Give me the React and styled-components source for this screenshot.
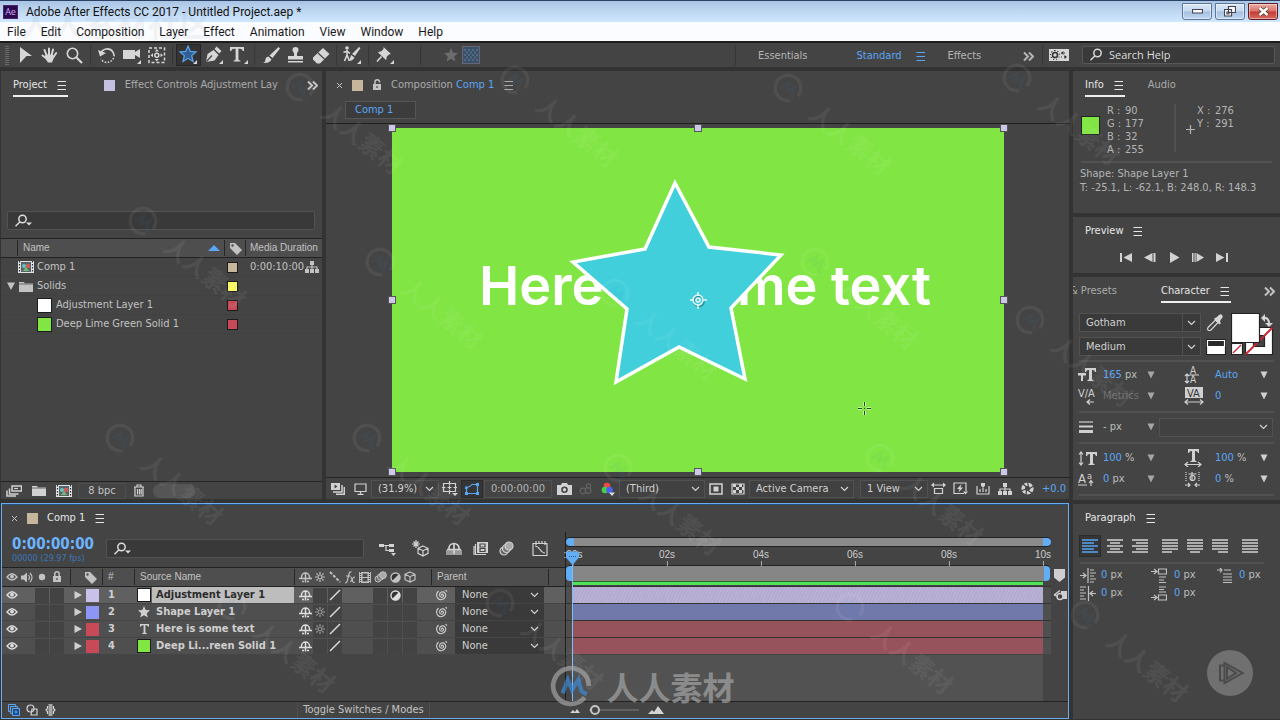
import React from 'react';
import styled, { createGlobalStyle, css } from 'styled-components';

const Global = createGlobalStyle`
  * { box-sizing: border-box; }
  body { margin: 0; background: #333; color: #c2c2c2;
    font: 11px/14px "DejaVu Sans Condensed", "DejaVu Sans", sans-serif; }
  button, input, select { font: inherit; color: inherit; margin: 0; padding: 0; border: 0;
    background: none; border-radius: 0; outline: 0; }
  input::placeholder { color: inherit; opacity: 1; }
  a { color: inherit; text-decoration: none; }
`;

/* ---------- page frame ---------- */
const Page = styled.div`
  position: relative; min-height: 100vh; display: flex; flex-direction: column; overflow: hidden;
`;
const TitleBar = styled.header`
  height: 22px; display: flex; align-items: center; padding: 0 2px; gap: 8px;
  border-top: 1px solid #2a4266; color: #111;
  background: linear-gradient(#a9c4e4, #bdd6f0 45%, #cfe7ff);
  font: 12px/16px Roboto, "Open Sans", sans-serif;
`;
const AppBadge = styled.span`
  width: 15px; height: 14px; background: #2b0a4c; border: 1px solid #4b2372; color: #d6a8ff;
  font: 9px/11px "Open Sans", sans-serif; text-align: center; margin-left: 1px;
`;
const Title = styled.span`flex: 1; white-space: nowrap;`;
const WinButtons = styled.div`display: flex; gap: 3px;`;
const WinButton = styled.button`
  width: 30px; height: 17px; border: 1px solid ${p => (p.$close ? '#5a1c20' : '#5d7596')};
  border-radius: 0 0 3px 3px; display: grid; place-items: center;
  background: ${p => (p.$close
    ? 'linear-gradient(#eaa9a4, #d9756d 48%, #c23b34 52%, #d8685c)'
    : 'linear-gradient(#dbe8f7, #c4d8ee 48%, #a4bfdf 52%, #c0d8f2)')};
  box-shadow: inset 0 0 0 1px rgba(255,255,255,.45);
`;
const MenuBar = styled.nav`
  height: 21px; display: flex; align-items: center; gap: 15px; padding: 0 7px 0;
  background: #fbfcff; color: #1a1a1a; border-bottom: 2px solid #1d1d1d;
  font: 12px/16px Roboto, "Open Sans", sans-serif;
`;
const Toolbar = styled.div`
  height: 24px; background: #444; display: flex; align-items: center; padding-left: 5px;
`;
const Grip = styled.span`
  width: 4px; height: 19px; margin-right: 3px;
  background: repeating-linear-gradient(#6a6a6a 0 1px, #444 1px 2px);
`;
const Tool = styled.button`
  width: 25px; height: 22px; display: grid; place-items: center; color: #d6d6d6;
  ${p => p.$active && css`background: #333; box-shadow: inset 0 0 0 1px #262626;`}
`;
const Rule = styled.span`width: 1px; height: 20px; background: #363636; margin: 0 3px; flex: none;`;
const ShapeOptions = styled.div`display: flex; align-items: center; gap: 4px; margin-left: 20px; flex: 1;`;
const Workspaces = styled.nav`
  display: flex; align-items: center; padding: 2px 5px 0 19px; width: 300px; color: #b5b5b5; gap: 14px;
`;
const Workspace = styled.a`
  color: ${p => (p.$active ? '#5aa5f5' : 'inherit')}; margin: 0 ${p => (p.$wide ? 35 : 0)}px 0 ${p => p.$ml || 0}px;
`;
const SearchHelp = styled.label`
  width: 193px; height: 18px; margin: 0 5px 0 11px; padding: 0 6px; gap: 2px;
  display: flex; align-items: center;
  background: #393939; border: 1px solid #575757; color: #d6d6d6; border-radius: 2px;
  input { width: 100%; font: 11px/16px "Open Sans", sans-serif; color: #ddd; }
`;

const Workbench = styled.main`
  flex: 1; display: flex; gap: 4px; padding: 4px 0 1px 1px;
`;
const MainColumn = styled.div`flex: 1; min-width: 0; display: flex; flex-direction: column; gap: 4px;`;
const SideColumn = styled.aside`width: 207px; flex: none; display: flex; flex-direction: column; gap: 4px;`;
const UpperRow = styled.div`display: flex; gap: 4px;`;
const Panel = styled.section`
  background: #444; display: flex; flex-direction: column; min-width: 0;
  flex: ${p => (p.$grow ? 1 : 'none')}; width: ${p => (p.$w ? p.$w + 'px' : 'auto')};
  height: ${p => (p.$h ? p.$h + 'px' : 'auto')};
`;
const Tabs = styled.div`
  height: 28px; flex: none; display: flex; align-items: center; white-space: nowrap; overflow: hidden;
  padding-left: ${p => p.$pad || 12}px; gap: ${p => p.$gap || 0}px;
`;
const Tab = styled.button`
  height: 22px; margin-top: 2px; display: flex; align-items: center; gap: 10px; flex: none;
  padding: 0 1px 0 0; color: ${p => (p.$active ? '#e6e6e6' : '#aaa')};
  border-bottom: 2px solid ${p => (p.$line ? '#eee' : 'transparent')};
`;
const ClipTab = styled(Tab)`flex: 0 1 auto; min-width: 0; overflow: hidden; margin-left: 36px; margin-right: 28px;`;
const Chip = styled.span`
  width: ${p => p.$s || 11}px; height: ${p => p.$s || 11}px; flex: none; display: block; background: ${p => p.$c};
  border: ${p => (p.$b ? '1px solid #1c1c1c' : '0')};
`;
const Push = styled.span`flex: 1;`;
const Blue = styled.span`color: #5aa5f5;`;
const Glyph = styled.svg`display: block; flex: none;`;

/* ---------- icons ---------- */
const G = ({ w = 16, h = 16, children, ...r }) => (
  <Glyph width={w} height={h} viewBox={`0 0 ${w} ${h}`} fill="none" stroke="currentColor" strokeWidth="1.200" aria-hidden="true" {...r}>{children}</Glyph>
);
const f = { fill: 'currentColor', stroke: 'none' };
const corner = <path {...f} d="M19 15v4h-4z" />;
const MenuIcon = () => <G w={10} h={10} strokeWidth="1"><path d="M0.500 1.500h8.500M0.500 5.500h8.500M0.500 9.500h8.500" /></G>;
const More = () => <G w={11} h={11} strokeWidth="2"><path d="M1 1.500l4 4-4 4M6 1.500l4 4-4 4" /></G>;
const Close = () => <G w={7} h={7} strokeWidth="1"><path d="M1 1l5 5M6 1L1 6" /></G>;
const Chevron = () => <G w={9} h={6}><path d="M1 1l3.500 3.500L8 1" /></G>;
const Down = () => <G w={8} h={8}><path {...f} d="M0.500 0.500h7L4 7.500z" /></G>;
const Search = ({ drop }) => (
  <G w={18} h={14} strokeWidth="1.500"><circle cx="8.500" cy="5" r="3.700" /><path d="M6 7.800L1.500 12.300" />
    {drop && <path {...f} d="M12 8.500h6l-3 3z" />}</G>
);
const Tag = () => <G w={13} h={13}><path fill="currentColor" fillRule="evenodd" stroke="none" d="M1 1h5l7 7-5 5-7-7zM3.500 2.300a1.200 1.200 0 100 2.400 1.200 1.200 0 000-2.400z" /></G>;
const Flow = () => <G w={14} h={12}><path {...f} d="M5 0h4v4H5zM0 8h4v4H0zM5 8h4v4H5zM10 8h4v4h-4z" /><path d="M7 4v4M2 8V6h10v2" /></G>;
const Folder = () => <G w={14} h={11}><path {...f} d="M0 1h5l1 1.500h8V11H0z" /><path stroke="#777" d="M0 3h14" /></G>;
const CompIcon = () => (
  <G w={16} h={12}><path fill="#e2e2e2" stroke="none" d="M0 0h16v12H0z" /><path stroke="#333" strokeDasharray="1.500 1.500" d="M1.500 0v12M14.500 0v12" />
    <path fill="#58646c" stroke="none" d="M3 1h10v10H3z" /><circle cx="6" cy="5" r="2" fill="#65c7c0" stroke="none" />
    <path fill="#c75d5d" stroke="none" d="M8 3h4v4H8z" /><path fill="#7bbb70" stroke="none" d="M5 10l3-4 3 4z" /></G>
);
const starPath = 'M7 0l2 4.700 5 .400-3.800 3.300 1.200 5L7 10.700l-4.400 2.700 1.200-5L0 5.100l5-.400z';
const Star = ({ c, s, size = 14 }) => <G w={size} h={size} viewBox="0 0 14 14"><path d={starPath} fill={c || 'currentColor'} stroke={s || 'none'} /></G>;
const Eye = () => <G w={12} h={10}><path d="M1 5q5-6.500 10 0Q6 11 1 5z" strokeWidth="1.400" /><circle cx="6" cy="4.700" r="1.900" {...f} /></G>;
const Speaker = () => <G w={12} h={11}><path {...f} d="M0 3.500h2.500L6 0.500v10L2.500 7.500H0z" /><path d="M7.500 3q2 2.500 0 5M9 1q4 4.500 0 9" /></G>;
const Dot = () => <G w={8} h={8}><circle cx="4" cy="4" r="3.200" {...f} /></G>;
const Lock = ({ open }) => <G w={10} h={12}><path {...f} d="M1 5h8v6H1z" /><path d={open ? 'M3 5V3a2.200 2.200 0 014.500 0v.500' : 'M2.800 5V3a2.200 2.200 0 014.400 0v2'} strokeWidth="1.500" /><path stroke="#444" d="M5 7v2" /></G>;
const Shy = () => <G w={13} h={11}><path d="M2.500 6.500V5a4 4 0 018 0v1.500M0 6.500h13M6.500 1v9.500M3 9.500h2M8 9.500h2" strokeWidth="1.500" /></G>;
const Sun = ({ dim }) => <G w={10} h={10} stroke={dim ? '#9a9a9a' : 'currentColor'}><circle cx="5" cy="5" r="2" /><path d="M5 0v2M5 8v2M0 5h2M8 5h2M1.500 1.500l1.300 1.300M7.200 7.200l1.300 1.300M8.500 1.500L7.200 2.800M2.800 7.200L1.500 8.500" /></G>;
const Slash = () => <G w={12} h={12}><path d="M1 11L11 1" strokeWidth="1.500" /></G>;
const Quality = () => <G w={12} h={12}><path d="M1 1l10 10" strokeWidth="2" strokeDasharray="3 1.500" /></G>;
const Fx = () => <G w={12} h={13}><path d="M1 12q2 0 2.500-3L5 3q.500-2.500 2.500-2M2 5h4.500M6.500 6q1 0 2.500 5 .500 1 1.500 0M11 6q-2 0-4.500 5" /></G>;
const Film = () => <G w={12} h={11}><path {...f} fillRule="evenodd" d="M0 0h12v11H0zM3.500 1.500v3.500h5V1.500zM3.500 6v3.500h5V6z" /><path stroke="#444" strokeDasharray="1 1" d="M1.500 0v11M10.500 0v11" /></G>;
const Blur = () => <G w={13} h={12} strokeWidth="1"><circle cx="4" cy="8" r="3" fill="#666" /><circle cx="6.500" cy="6" r="3.200" fill="#777" /><circle cx="9" cy="4.200" r="3.400" fill="#aaa" /></G>;
const Half = () => <G w={11} h={11}><circle cx="5.500" cy="5.500" r="4.500" fill="#333" strokeWidth="1.400" /><path {...f} d="M9 2A5 5 0 012 9z" /></G>;
const Cube = () => <G w={12} h={12}><path d="M6 1l5 2.300v5.400L6 11 1 8.700V3.300zM1 3.300l5 2.400 5-2.400M6 5.700V11" /></G>;
const Whip = () => <G w={12} h={12} strokeWidth="1.100"><path d="M6.200 6.500C5 6 5.500 4.800 6.700 5.200 8.200 6 7.500 8.300 5.600 8.300 3 8 2.800 4.200 5.500 3 8.600 2.200 10.500 5 9.400 7.800 8.200 10.800 4 11.600 2 9.500 0 7 .500 4 2.500 2M9.500 1.200L11 2.500" /></G>;
const Twirl = ({ open }) => <G w={8} h={8}><path {...f} d={open ? 'M0 0.500h8L4 8z' : 'M0.500 0l7.500 4-7.500 4z'} /></G>;

const tools = [
  ['Selection', <G w={14} h={16}><path {...f} d="M2 0l12 9H8.500L2 16z" /></G>],
  ['Hand', <G w={17} h={17} strokeWidth="2" strokeLinecap="round"><path d="M5.500 8L3.500 3M8 7.500V1.500M10.700 8l1.300-5.500M5 11L1.500 8.500M12.500 10l2.700-4" /><path {...f} d="M4.500 7.500h7l2 2-2.500 6H7l-3.500-5z" /></G>],
  ['Zoom', <G w={17} h={17} strokeWidth="1.600"><circle cx="6.500" cy="6.500" r="5.200" /><path d="M10.500 10.500l5.500 5.500" strokeWidth="2.200" /></G>],
  null,
  ['Rotation', <G w={18} h={17} strokeWidth="1.600"><path d="M2.500 7A7 7 0 0115 5M15 5l1 3" /><path d="M16 8a7 7 0 01-13 4" strokeDasharray="1.500 1.500" /><path {...f} d="M0 3l2 6.500L8 6z" /></G>],
  ['Camera', <G w={20} h={20}><path {...f} d="M1 5h12v2l5-3v9l-5-3v4H1z" />{corner}</G>],
  ['Pan Behind', <G w={18} h={17} strokeWidth="1.500"><path strokeDasharray="3 2" d="M1 1h15.500v14.500H1z" /><circle cx="8.800" cy="8.200" r="2" /><path {...f} d="M8.800 2l2 2.500h-4zM8.800 14.500l2-2.500h-4zM2.500 8.200L5 6.200v4zM15 8.200l-2.500-2v4z" /></G>],
  null,
  ['Star', <G w={22} h={20}><path transform="translate(2 1) scale(1.150)" d={starPath} fill="#2f5f96" stroke="#5fa8f0" strokeWidth="1" />{corner}</G>, true],
  ['Pen', <G w={20} h={20}><path {...f} d="M2 17l1.500-8 6-4 5 5-4 5.500z" /><path {...f} d="M10.500 4l2-2.500 5 4.500-2.300 2.600z" /><path stroke="#444" d="M2.500 16.500l5.500-6" />{corner}</G>],
  ['Type', <G w={20} h={20}><path {...f} d="M1 2h14v4h-1.200q-.300-2.300-3-2.300H9.400V14q0 1.500 2 1.500v1H4.600v-1q2 0 2-1.500V3.700H5.200Q2.500 3.700 2.200 6H1z" />{corner}</G>],
  null,
  ['Brush', <G w={18} h={17}><path {...f} d="M16.500 0L18 1.500 10.500 11 7.500 8.500zM6.500 9.500l3 3q-2 4-8.500 3.500 2.500-1 2.500-3.500 0-2.500 3-3z" /></G>],
  ['Clone Stamp', <G w={17} h={17}><path {...f} d="M8.500 0a3 3 0 013 3q0 1.500-1.500 3v3h6v3.500H1V9h6V6Q5.500 4.500 5.500 3a3 3 0 013-3zM1 14h15v1.500H1z" /></G>],
  ['Eraser', <G w={18} h={17}><path {...f} d="M11 1l6.500 6L8 16.500H5L1 12.500v-2z" /><path stroke="#444" d="M6 6l6.500 6" /></G>],
  null,
  ['Roto Brush', <G w={22} h={20}><circle cx="5" cy="3" r="1.800" {...f} /><path d="M5 5v5l-2.500 6M5 10l2.500 6M1.500 7.500L5 6l3 2.500" strokeWidth="1.600" /><path {...f} d="M17 2l1.500 1L13 11l-3-2zM9 10l3.500 2.500Q11 16 6 16q2.500-2 3-6z" />{corner}</G>],
  null,
  ['Puppet Pin', <G w={20} h={20}><path {...f} d="M8.500 2l7.500 7-2 .500L11.500 12q.500 2-.500 3L3 7.500q1.500-1.500 3-1L8.500 4z" /><path d="M6.500 11.500L2 16.500" strokeWidth="1.600" />{corner}</G>],
];

/* ---------- form parts ---------- */
const IconButton = styled.button`
  width: ${p => p.$w || 22}px; height: 18px; flex: none; display: grid; place-items: center; color: #d2d2d2;
  ${p => p.$active && css`background: #353535; box-shadow: inset 0 0 0 1px #2c2c2c; color: #5aa5f5;`}
`;
const SelectBox = styled.span`
  display: grid; align-items: center; flex: none; width: ${p => (p.$w ? p.$w + 'px' : 'auto')}; height: ${p => p.$h || 18}px;
  background: ${p => (p.$flat || p.$split ? '#3a3a3a' : '#414141')}; border: 1px solid ${p => (p.$flat ? '#3a3a3a' : '#515151')};
  color: #d0d0d0; font-weight: 400;
  > * { grid-area: 1 / 1; }
  select { appearance: none; width: 100%; height: 100%; padding-left: 6px; }
`;
const Caret = styled.span`
  justify-self: end; height: 100%; display: grid; place-items: center; pointer-events: none;
  width: ${p => (p.$split ? 18 : 17)}px; border-left: ${p => (p.$split ? '1px solid #515151' : '0')};
`;
const Pick = ({ label, value, $split, ...r }) => (
  <SelectBox $split={$split} {...r}><select aria-label={label} defaultValue={value}><option>{value}</option></select><Caret $split={$split}><Chevron /></Caret></SelectBox>
);
const Field = styled.label`
  display: flex; align-items: center; height: 19px; background: #393939; border: 1px solid #535353;
  border-radius: 2px; padding-left: 6px; color: #ddd; margin: ${p => p.$m || '0'}; width: ${p => (p.$w ? p.$w + 'px' : 'auto')};
  input { flex: 1; min-width: 0; }
`;

/* ---------- project panel ---------- */
const headCell = css`
  height: 19px; padding: 0; text-align: left; font: 400 10px/14px "Liberation Sans", sans-serif; background: #4e4e4e;
  border-top: 1px solid #222; border-bottom: 1px solid #222;
`;
const ItemTable = styled.table`
  width: 100%; border-collapse: collapse; table-layout: fixed;
  th { ${headCell} }
  td { height: 19px; padding: 0; border-bottom: 1px solid #414141; }
`;
const CellFlex = styled.div`
  display: flex; align-items: center; height: 16px; overflow: hidden; white-space: nowrap;
  gap: ${p => (p.$gap === undefined ? 4 : p.$gap)}px; padding-left: ${p => p.$pad || 0}px; padding-right: ${p => p.$pr || 0}px;
  border-left: ${p => (p.$bar ? '1px solid #262626' : '0')};
`;
const FootBar = styled.div`
  height: ${p => p.$h || 18}px; flex: none; display: flex; align-items: center; border-top: 1px solid #232323; padding-left: ${p => p.$pad || 0}px;
`;
const Depth = styled.button`width: 48px; height: 16px; margin: 0 2px; border: 1px solid #4e4e4e;`;
const ScrollThumb = styled.span`width: 42px; height: 14px; border-radius: 7px; background: #555; margin-left: 3px;`;
const Filler = styled.div`height: 147px; flex: none;`;

const items = [
  { name: 'Comp 1', icon: <CompIcon />, pad: 17, gap: 3, label: '#c6b79c', dur: '0:00:10:00' },
  { name: 'Solids', icon: <Folder />, pad: 6, open: true, label: '#f8f860' },
  { name: 'Adjustment Layer 1', icon: <Chip $s={15} $c="#fff" $b />, pad: 36, label: '#c84a58' },
  { name: 'Deep Lime Green Solid 1', icon: <Chip $s={15} $c="#81e543" $b />, pad: 36, label: '#c84a58' },
];

function ProjectPanel() {
  return (
    <Panel $w={321}>
      <Tabs>
        <Tab $active $line>Project <MenuIcon /></Tab>
        <ClipTab as="div"><Chip $c="#c4c0e2" /> Effect Controls Adjustment Lay</ClipTab>
        <More />
      </Tabs>
      <Push />
      <Field $m="0 7px 8px 6px"><Search drop /><input aria-label="Search project" /></Field>
      <ItemTable>
        <colgroup><col /><col style={{ width: 21 }} /><col style={{ width: 77 }} /></colgroup>
        <thead><tr>
          <th><CellFlex $pad={16}><CellFlex $bar $pad={5}>Name</CellFlex><Push /><Blue><G w={12} h={6}><path {...f} d="M6 0l6 6H0z" /></G></Blue><CellFlex $gap={0} /></CellFlex></th>
          <th><CellFlex $bar $pad={4}><Tag /></CellFlex></th>
          <th><CellFlex $bar $pad={4}>Media Duration</CellFlex></th>
        </tr></thead>
        <tbody>
          {items.map(i => (
            <tr key={i.name}>
              <td><CellFlex $pad={i.pad} $gap={i.gap}>{i.open && <Twirl open />}{i.icon}{i.name}</CellFlex></td>
              <td><CellFlex $pad={3}><Chip $s={11} $c={i.label} $b /></CellFlex></td>
              <td><CellFlex $pad={5} $gap={1}>{i.dur}{i.dur && <Flow />}</CellFlex></td>
            </tr>
          ))}
        </tbody>
      </ItemTable>
      <Filler />
      <FootBar>
        <IconButton $w={25} aria-label="Interpret footage"><G w={16} h={12}><path d="M6 1h9.500v5H6zM3.500 3.500v5.500h9M1 5.500v5.500h9" strokeWidth="1.500" /><path d="M8 3.500h4" /></G></IconButton>
        <IconButton $w={25} aria-label="New folder"><Folder /></IconButton>
        <IconButton $w={25} aria-label="New composition"><CompIcon /></IconButton>
        <Depth>8 bpc</Depth>
        <IconButton aria-label="Delete"><G w={12} h={13}><path d="M1 3h10M4 3V1h4v2M2 3v9h8V3M4.500 5v5.500M6.500 5v5.500M8.200 5v5.500" /></G></IconButton>
        <ScrollThumb />
      </FootBar>
    </Panel>
  );
}

/* ---------- composition panel ---------- */
const CompCrumb = styled.div`height: 25px; padding: 2px 0 0 19px; border-bottom: 1px solid #1f1f1f;`;
const CrumbButton = styled.button`
  width: 71px; height: 18px; text-align: left; padding-left: 9px; color: #5aa5f5; border: 1px solid #555; background: #3c3c3c;
`;
const Stage = styled.div`padding: 4px 65px 5px 66px; background: #444;`;
const Canvas = styled.svg`
  display: block; width: 100%; aspect-ratio: 612 / 344; overflow: visible; background: #81e543;
  text { font: 600 54px Inter, sans-serif; fill: #fff; }
`;
const TimeBox = styled.button`width: 68px; height: 18px; border: 1px solid #505050; margin: 0 1px; color: #b5b5b5;`;
const Exposure = styled.button`color: #5aa5f5; margin-left: 2px;`;
const FootEnd = styled.span`width: 3px;`;

function CompPanel() {
  const handles = [0, 306, 612].flatMap(x => [0, 172, 344].map(y => [x, y])).filter(([x, y]) => !(x === 306 && y === 172));
  return (
    <Panel $grow>
      <Tabs $pad={10} $gap={9}>
        <Close /><Chip $c="#c6b79c" /><Lock open />
        <Tab><span>Composition <Blue>Comp 1</Blue></span> <MenuIcon /></Tab>
      </Tabs>
      <CompCrumb><CrumbButton>Comp 1</CrumbButton></CompCrumb>
      <Stage>
        <Canvas viewBox="0 0 612 344" role="img" aria-label="Composition view">
          <text x="87" y="177">Here is some text</text>
          <path d="M283 55L317 119 389 127 339 180 353 251 287 219 224 254 235 181 181 134 253 121z" fill="#40cfdb" stroke="#fff" strokeWidth="3.500" />
          <g fill="none" stroke="#1d5f66" strokeWidth="1.500" opacity=".6"><circle cx="307" cy="173.500" r="5" /></g>
          <g fill="none" stroke="#e8f6f8" strokeWidth="1.500"><circle cx="306" cy="172" r="5" /><circle cx="306" cy="172" r="2" /><path d="M306 164v4M306 177v4M298 172h4M311 172h4" /></g>
          <path fill="none" d="M472.500 274v4M472.500 283v4M466 280.500h4M475 280.500h4" strokeWidth="3" stroke="#c9f5ae" />
          <path fill="none" stroke="#1e4d10" d="M472.500 274v4M472.500 283v4M466 280.500h4M475 280.500h4M472 280.500h1" />
          {handles.map(([x, y]) => <rect key={x + '-' + y} x={x - 3.500} y={y - 3.500} width="7" height="7" fill="#cdc8ea" stroke="#555" strokeWidth="1" />)}
        </Canvas>
      </Stage>
      <FootBar $h={22} $pad={1}>
        <IconButton aria-label="Always preview"><G w={14} h={12}><path {...f} d="M0 0h9v7H0z" /><path stroke="none" fill="#444" d="M3.500 1.500L6.500 3.500l-3 2z" /><path d="M11 2v7H2M13.300 4v7.300H5" strokeWidth="1.500" /></G></IconButton>
        <IconButton aria-label="Main viewer"><G w={13} h={12}><path d="M1 1h11v7.500H1zM6.500 8.500V11M3.500 11.300h6" /></G></IconButton>
        <Pick label="Magnification" value="(31.9%)" $w={68} />
        <IconButton aria-label="Grid and guides"><G w={16} h={15}><path d="M1.500 2.500h12v8h-12zM7.500 0v4.500M7.500 8.500V13M0 6.500h3.500M11.500 6.500H15M5.500 6.500h4M7.500 5v3" /><path {...f} d="M10 12h6l-3 3z" /></G></IconButton>
        <IconButton $active aria-label="Mask visibility"><G w={16} h={14}><path d="M2.500 11.500V5.500Q6 5 8 2.500h5.500v9z" /><path {...f} d="M1 10h3v3H1zM12 10h3v3h-3zM12 1h3v3h-3zM1 4.500h2.500v2.500H1z" /></G></IconButton>
        <TimeBox>0:00:00:00</TimeBox>
        <IconButton aria-label="Snapshot"><G w={15} h={12}><path {...f} fillRule="evenodd" d="M0 2h4l1-2h5l1 2h4v10H0zM7.500 3.500a3.300 3.300 0 100 6.600 3.300 3.300 0 000-6.600z" /><circle cx="7.500" cy="6.800" r="1.700" {...f} /></G></IconButton>
        <IconButton aria-label="Show snapshot"><G w={14} h={12} stroke="#626262"><circle cx="4" cy="8" r="2.800" /><circle cx="9" cy="7.500" r="2.800" /><circle cx="9.500" cy="3" r="2.200" /></G></IconButton>
        <IconButton aria-label="Channels"><G w={14} h={14} stroke="none"><circle cx="6" cy="4" r="3.300" fill="#f04a40" /><circle cx="4" cy="8" r="3.300" fill="#45d045" /><circle cx="8.500" cy="8" r="3.300" fill="#4a60f0" /><path fill="#ddd" d="M8 10.500h6l-3 3.500z" /></G></IconButton>
        <Pick label="Resolution" value="(Third)" $w={86} />
        <IconButton aria-label="Region of interest"><G w={14} h={12}><path d="M1 1h12v10H1z" strokeWidth="1.500" /><path {...f} d="M4.500 3.500h5v5h-5z" /></G></IconButton>
        <IconButton aria-label="Transparency grid"><G w={14} h={12}><path d="M1 1h12v10H1z" /><path {...f} d="M2 1h3v3H2zM8 1h3v3H8zM5 4h3v3H5zM11 4h2v3h-2zM2 7h3v3H2zM8 7h3v3H8z" /></G></IconButton>
        <Pick label="Camera" value="Active Camera" $w={105} />
        <Push />
        <Pick label="Views" value="1 View" $w={68} />
        <IconButton aria-label="Pixel aspect"><G w={15} h={13}><path d="M3.500 6.500h8v5h-8zM1 3h13" /><path {...f} d="M0 3l3-2.500v5zM15 3l-3-2.500v5z" /></G></IconButton>
        <IconButton aria-label="Fast previews"><G w={15} h={13}><path d="M11 11.500H1V1h12v8" /><path {...f} d="M8.500 2L4 7h2.500l-1 3.500L10 5.500H7.500zM10 9.500h5l-2.500 3z" /></G></IconButton>
        <IconButton aria-label="Timeline"><G w={14} h={12}><path d="M1 3v8h12V3M4 6v3M7 5v4M10 6v3" /><path {...f} d="M5 0h4v2.500L7 5 5 2.500z" /></G></IconButton>
        <IconButton aria-label="Flowchart"><Flow /></IconButton>
        <IconButton $w={24} aria-label="Reset exposure"><G w={13} h={13}><circle cx="6.500" cy="6.500" r="4.300" strokeWidth="3.600" /><path stroke="#444" d="M6.500 0l1 5M12.500 4L8 7M11 11L7 8.500M5 13l.500-5M0 9l5-2M2 2l3.500 3" /></G></IconButton>
        <Exposure>+0.0</Exposure><FootEnd />
      </FootBar>
    </Panel>
  );
}

/* ---------- timeline ---------- */
const TimelinePanel = styled(Panel)`border: 1px solid #6cabec; box-shadow: inset 0 1px 0 #24507f;`;
const TimelineBody = styled.div`flex: 1; display: flex;`;
const LayerSide = styled.div`width: 564px; flex: none; display: flex; flex-direction: column; border-right: 1px solid #1f1f1f;`;
const TimeRow = styled.div`height: 35px; display: flex; align-items: center; padding: 0 0 2px 10px;`;
const Clock = styled.div`
  width: 94px; color: #3b76b8; font-size: 9px; line-height: 12px; padding-top: 2px;
  b { display: block; font-size: 15px; line-height: 16px; color: #6cb4ff; }
`;
const TimeTools = styled.div`display: flex; padding-left: 11px;`;
const LayerTable = styled.table`
  width: 100%; table-layout: fixed; border-collapse: collapse;
  th { ${headCell} }
  td { height: 17px; padding: 0; }
`;
const LayerRow = styled.tr`
  background: ${p => (p.$sel ? '#606060' : '#4f4f4f')}; border-bottom: 1px solid #454545; color: #cfcfcf; font-weight: 700;
`;
const Slot = styled.button`
  width: 14px; height: 15px; display: grid; place-items: center; color: #ddd;
  background: ${p => (p.$box ? '#434343' : 'none')};
`;
const LayerName = styled.span`
  flex: 1; height: 16px; line-height: 16px; padding-left: 4px; margin-left: -3px;
  ${p => p.$sel && css`background: #bdbdbd; color: #2b2b2b;`}
`;
const Icon14 = styled.span`width: 14px; display: grid; place-items: center; flex: none;`;

const layers = [
  { n: 1, name: 'Adjustment Layer 1', c: '#c9c1e8', icon: <Chip $s={14} $c="#fff" $b />, adj: true, bar: '#b3abd2', sel: true },
  { n: 2, name: 'Shape Layer 1', c: '#8d96f5', icon: <Star size={12} />, sun: true, bar: '#7179ab' },
  { n: 3, name: 'Here is some text', c: '#c84a58', icon: <G w={9} h={10} viewBox="0 0 10 11"><path {...f} d="M0 0h10v3H9q-.300-1.700-2-1.700H6V8.700q0 1.300 1.500 1.300v1h-5v-1Q4 10 4 8.700V1.300H3Q1.300 1.300 1 3H0z" /></G>, sun: true, bar: '#97535b' },
  { n: 4, name: 'Deep Li...reen Solid 1', c: '#c84a58', icon: <Chip $s={14} $c="#81e543" $b />, bar: '#97535b' },
];

const GraphSide = styled.div`flex: 1; min-width: 0; display: flex; flex-direction: column; padding-right: 17px; position: relative;`;
const NavBar = styled.div`
  height: 8px; flex: none; margin-top: 6px; border: solid #62aef5; border-width: 0 8px; border-radius: 6px; background: #8b8b8b;
  box-shadow: 0 -1px 0 #222, 0 1px 0 #222;
`;
const Ruler = styled.div`
  height: 19px; flex: none; margin-top: 1px; position: relative; font: 10px/15px "Liberation Sans", sans-serif; color: #ccc;
`;
const Mark = styled.span`
  position: absolute; top: 0; left: calc(7px + (100% - 15px) * ${p => p.$at}); transform: translateX(-50%);
  height: 19px; text-align: center;
  &::after { content: ''; display: block; width: 1px; height: 5px; margin: -1px auto 0; background: #aaa; }
`;
const WorkArea = styled.div`
  height: 15px; flex: none; border: solid #62aef5; border-width: 0 6px; border-radius: 4px; background: #868686; margin-right: 1px;
  box-shadow: 0 -1px 0 #222;
`;
const Cache = styled.div`height: 4px; flex: none; margin: 0 8px 1px 7px; background: #53e05a; border-top: 1px solid #226a26; `;
const Track = styled.div`padding: 0 8px 0 7px; height: 17px; flex: none; background: #4f4f4f; border-top: 1px solid #333;`;
const Bar = styled.div`height: 16px; background: ${p => p.$c}; ${p => p.$grain && css`background-image: repeating-linear-gradient(115deg, rgba(255,255,255,.10) 0 1px, transparent 1px 3px);`}`;
const EmptyTracks = styled.div`flex: 1; margin: 1px 8px 0 7px; background: #525252;`;
const Playhead = styled.div`
  position: absolute; left: 0; top: 19px; bottom: 0; width: 13px; pointer-events: none; z-index: 2;
  display: flex; flex-direction: column; align-items: center;
  &::after { content: ''; width: 1px; flex: 1; background: #7fbdf8; }
`;
const Markers = styled.div`position: absolute; right: 1px; top: 36px; display: grid; gap: 7px; color: #cfcfcf;`;
const ToggleModes = styled.button`width: 133px; height: 16px; border: 1px solid #505050; border-top: 0; border-bottom: 0;`;
const ToggleGap = styled.span`width: 238px; flex: none;`;
const Zoomer = styled.div`
  display: flex; align-items: center; gap: 9px; padding-left: 140px; color: #d5d5d5;
  input { appearance: none; width: 50px; height: 2px; background: #606060; }
  input::-webkit-slider-thumb { appearance: none; width: 10px; height: 10px; border-radius: 5px; border: 2px solid #c4c4c4; background: #444; }
`;

function Timeline() {
  const cols = [15, 15, 15, 15, 5, 32, 32, 160, 4, 15, 15, 15, 15, 15, 15, 15, 15, 13, 117];
  const mid = [<Shy />, <Sun />, <Quality />, <Fx />, <Film />, <Blur />, <Half />, <Cube />];
  return (
    <TimelinePanel $grow>
      <Tabs $pad={9} $gap={9}>
        <Close /><Chip $c="#c6b79c" /><Tab $active>Comp 1 <MenuIcon /></Tab>
      </Tabs>
      <TimelineBody>
        <LayerSide>
          <TimeRow>
            <Clock><b>0:00:00:00</b>00000 (29.97 fps)</Clock>
            <Field $w={258}><Search drop /><input aria-label="Search layers" /></Field>
            <TimeTools>
              <IconButton $w={24} aria-label="Flow"><G w={17} h={14}><path {...f} d="M0 2h5v3H0zM10 2h5v3h-5zM10 7h5v3h-5zM12 11h5l-2.500 3z" /><path d="M5 3.500h5M7 3.500v5h3" /></G></IconButton>
              <IconButton $w={42} aria-label="Draft 3D"><G w={17} h={17}><path d="M4 0v8M0 4h8M1.500 1.500l5 5M6.500 1.500l-5 5" /><path d="M11 6l5 2.300v5L11 16l-5-2.700v-5zM6 8.300l5 2.400 5-2.400M11 10.700V16" /></G></IconButton>
              <IconButton $w={26} aria-label="Hide shy"><G w={16} h={14}><path {...f} d="M0 8h16v5H0z" opacity=".6" /><path d="M3 7.500V6a5 4.500 0 0110 0v1.500M1 7.500h14M8 1v11" strokeWidth="1.700" /></G></IconButton>
              <IconButton $w={26} aria-label="Frame blend"><G w={15} h={15}><path {...f} d="M4 1h11v11H4z" /><path d="M2.500 3v10.500H13M1 5v9" /><path stroke="#444" d="M7 3h5v3H7zM7 7.500h5v3H7z" /></G></IconButton>
              <IconButton $w={26} aria-label="Motion blur"><G w={15} h={15}><circle cx="5" cy="10" r="4" fill="#666" /><circle cx="7.500" cy="7.500" r="4" fill="#777" /><circle cx="10" cy="5" r="4" fill="#aaa" /></G></IconButton>
              <IconButton $w={42} aria-label="Graph editor"><G w={16} h={16}><path d="M1 2.500h14v12H1zM4 0v4M7 0v3M10 0v3M13 0v4M3 5c5 0 5 7 10 7" /></G></IconButton>
            </TimeTools>
          </TimeRow>
          <LayerTable>
            <colgroup>{[3, ...cols].map((w, i) => <col key={i} style={{ width: w }} />)}<col /></colgroup>
            <thead><tr>
              <th /><th><Icon14><Eye /></Icon14></th><th><Icon14><Speaker /></Icon14></th><th><Icon14><Dot /></Icon14></th><th><Icon14><Lock /></Icon14></th><th />
              <th><CellFlex $bar $pad={13}><Tag /></CellFlex></th>
              <th><CellFlex $bar $pad={5}>#</CellFlex></th>
              <th><CellFlex $bar $pad={5}>Source Name</CellFlex></th>
              <th><CellFlex $bar /></th>
              {mid.map((m, i) => <th key={i}><Icon14>{m}</Icon14></th>)}
              <th /><th><CellFlex $bar $pad={5}>Parent</CellFlex></th><th><CellFlex $bar /></th>
            </tr></thead>
            <tbody>
              {layers.map(l => (
                <LayerRow key={l.n} $sel={l.sel}>
                  <td /><td><Slot aria-label="Visible"><Eye /></Slot></td><td /><td><Slot $box aria-label="Solo" /></td><td><Slot $box aria-label="Lock" /></td><td />
                  <td><CellFlex $pad={4}><Twirl /><Chip $s={13} $c={l.c} /></CellFlex></td>
                  <td><CellFlex $pad={6}>{l.n}</CellFlex></td>
                  <td><CellFlex $pad={3}><Icon14>{l.icon}</Icon14><LayerName $sel={l.sel}>{l.name}</LayerName></CellFlex></td>
                  <td />
                  <td><Slot aria-label="Shy"><Shy /></Slot></td>
                  <td><Slot $box aria-label="Collapse">{l.sun && <Sun dim />}</Slot></td>
                  <td><Slot $box aria-label="Quality"><Slash /></Slot></td>
                  <td /><td />
                  <td><Slot $box aria-label="Motion blur" /></td>
                  <td><Slot $box aria-label="Adjustment">{l.adj && <Half />}</Slot></td>
                  <td><Slot $box aria-label="3D" /></td>
                  <td />
                  <td><CellFlex $pad={4} $gap={6}><Icon14><Whip /></Icon14><Pick label={'Parent of layer ' + l.n} value="None" $flat $w={89} $h={16} /></CellFlex></td><td />
                </LayerRow>
              ))}
            </tbody>
          </LayerTable>
        </LayerSide>
        <GraphSide>
          <NavBar />
          <Ruler>
            {[':00s', '02s', '04s', '06s', '08s', '10s'].map((t, i) => <Mark key={t} $at={i / 5}>{t}</Mark>)}
          </Ruler>
          <WorkArea /><Cache />
          {layers.map(l => <Track key={l.n}><Bar $c={l.bar} $grain={l.sel} /></Track>)}
          <EmptyTracks />
          <Playhead><G w={13} h={14}><path fill="#62aef5" stroke="none" d="M0 0.500h13v6L6.500 14 0 6.500z" /><path stroke="#2a5f96" d="M3 5.500h7" strokeDasharray="1 1" /></G></Playhead>
          <Markers>
            <G w={14} h={14}><path {...f} d="M1 1h11v8.500l-5.500 4.500L1 9.500z" /></G>
            <G w={14} h={12}><path {...f} d="M8 2h6v8H8z" /><path d="M1 6l6-4.500M1 6l4 1" strokeWidth="1.500" /><circle cx="7" cy="7.500" r="3" fill="#444" strokeWidth="1.500" /></G>
          </Markers>
        </GraphSide>
      </TimelineBody>
      <FootBar $h={17} $pad={3}>
        <IconButton $w={18} aria-label="Layer switches"><Blue><G w={12} h={12} strokeWidth="1"><path d="M7.500 3V.500H.500v7H3M9.500 5V2.500h-7v7H5" /><path d="M4.500 4.500h7v7h-7zM8 6.500v3M6.500 8h3" fill="#1d4d80" /></G></Blue></IconButton>
        <IconButton $w={18} aria-label="Transfer controls"><G w={12} h={12}><circle cx="4.500" cy="4.500" r="3.500" /><path d="M6 5h5v6H5z" /></G></IconButton>
        <IconButton $w={18} aria-label="In and out"><G w={11} h={12}><path {...f} opacity=".7" d="M3.500 0h4v12h-4z" /><path d="M2.500 2v2.500L1 6l1.500 1.500V10M8.500 2v2.500L10 6 8.500 7.500V10" /></G></IconButton>
        <ToggleGap /><ToggleModes>Toggle Switches / Modes</ToggleModes>
        <Zoomer>
          <G w={10} h={5}><path {...f} d="M0 5l3-3 2 2 2-3 3 4z" /></G>
          <input type="range" min="0" max="100" defaultValue="2" aria-label="Zoom" />
          <G w={16} h={8}><path {...f} d="M0 8l4-4 2 2 4-6 6 8z" /></G>
        </Zoomer>
      </FootBar>
    </TimelinePanel>
  );
}

/* ---------- side panels ---------- */
const InfoGrid = styled.div`
  display: grid; grid-template-columns: 20px 61px 4px 1fr; column-gap: 6px; margin: 5px 8px 0 8px; padding-bottom: 5px;
  border-bottom: 2px solid #525252; line-height: 13px; color: #b4b4b4;
`;
const ColorChip = styled.span`width: 19px; height: 19px; margin-top: 12px; background: #81e543; border: 1px solid #222;`;
const ReadOut = styled.dl`
  display: grid; grid-template-columns: 18px 1fr; margin: 0; align-content: start; grid-auto-rows: 13px;
  dt, dd { margin: 0; }
`;
const VRule = styled.span`width: 2px; height: 48px; background: #525252;`;
const Notes = styled.p`margin: 4px 7px; line-height: 14px; color: #b4b4b4; white-space: nowrap;`;
const Transport = styled.div`display: flex; justify-content: center; gap: 2px; padding: 3px 6px 0 0;`;
const XY = styled.div`display: flex; gap: 2px; padding-left: 2px; > svg { margin-top: 21px; }`;

const PresetTab = styled(Tab)`margin-left: -4px; width: 91px; overflow: hidden;`;
const CharEnd = styled.span`width: 5px;`;
const FontBlock = styled.div`
  display: grid; grid-template-columns: 122px 20px 1fr; column-gap: 5px; row-gap: 5px; margin: 8px 6px 0; align-items: center; color: #d6d6d6;
`;
const SwatchArt = styled.button`grid-column: 3; grid-row: 1 / 3; justify-self: start;`;
const HRule = styled.hr`border: 0; height: 2px; background: #515151; margin: ${p => p.$m || '5px 6px 4px'}; width: auto;`;
const MetricGrid = styled.div`
  display: grid; align-items: center; margin: 0 7px 0 5px; row-gap: 1px; grid-auto-rows: 20px; color: #d0d0d0;
  grid-template-columns: ${p => (p.$stroke ? '25px 42px 14px 1fr' : '25px 42px 39px 31px 1fr 13px')};
`;
const Value = styled.button`text-align: left; white-space: nowrap; color: ${p => (p.$off ? '#707070' : '#bdbdbd')};`;
const Arrow = styled.span`color: #a5a5a5; padding-left: 2px;`;

const AlignRow = styled.div`display: flex; padding: 3px 6px 0; `;
const AlignButton = styled(IconButton)`width: 22px; height: 22px; margin-right: ${p => p.$mr || 3}px;`;
const IndentGrid = styled.div`
  display: grid; grid-template-columns: 21px 50px 23px 43px 22px 1fr; grid-auto-rows: 18px; align-items: center; margin-left: 7px;
`;

const AlignIcon = ({ rows }) => (
  <G w={16} h={14} strokeWidth="1.500">{rows.map(([a, b], i) => <path key={i} d={`M${a} ${1 + i * 3}H${b}`} />)}</G>
);
const F = [0, 16];
const aligns = [
  ['Left', [F, [0, 12], F, [0, 12], F]], ['Center', [F, [3, 13], F, [3, 13], F]], ['Right', [F, [4, 16], F, [4, 16], F], 8],
  ['Justify left', [F, F, F, F, [0, 10]]], ['Justify center', [F, F, F, F, [3, 13]]], ['Justify right', [F, F, F, F, [6, 16]], 8],
  ['Justify all', [F, F, F, F, F]],
];
const TT = ({ h }) => <path {...f} transform={h} d="M0 0h11v4h-1q-.300-2-2.500-2h-.500v9q0 1 1.500 1v1h-6v-1q1.500 0 1.500-1V2h-.500Q1.300 2 1 4H0z" />;
const Letter = styled.text`font: ${p => p.$s || 12}px "DejaVu Sans Condensed", sans-serif; fill: ${p => p.$c || 'currentColor'}; stroke: none;`;

function SidePanels() {
  return (
    <SideColumn>
      <Panel $h={142}>
        <Tabs $gap={23}><Tab $active $line>Info <MenuIcon /></Tab><Tab>Audio</Tab></Tabs>
        <InfoGrid>
          <ColorChip />
          <ReadOut><dt>R :</dt><dd>90</dd><dt>G :</dt><dd>177</dd><dt>B :</dt><dd>32</dd><dt>A :</dt><dd>255</dd></ReadOut>
          <VRule />
          <XY><G w={9} h={9}><path d="M4.500 0v9M0 4.500h9" /></G><ReadOut><dt>X :</dt><dd>276</dd><dt>Y :</dt><dd>291</dd></ReadOut></XY>
        </InfoGrid>
        <Notes>Shape: Shape Layer 1<br />T: -25.1, L: -62.1, B: 248.0, R: 148.3</Notes>
      </Panel>
      <Panel $h={56}>
        <Tabs><Tab $active>Preview <MenuIcon /></Tab></Tabs>
        <Transport>
          {[['First frame', 'M0 1h2v9H0zM12 1v9L3.500 5.500z'], ['Previous frame', 'M9.500 1h2v9h-2zM8.500 1v9L0 5.500z'], ['Play', 'M2 0l9.500 5.500L2 11z'],
            ['Next frame', 'M0 1h1.500v9H0zM2.500 1h1.200v9H2.500zM4.500 1L12 5.500 4.500 10z'], ['Last frame', 'M10 1h2v9h-2zM0 1l8.500 4.500L0 10z']].map(([n, d]) => (
              <IconButton key={n} aria-label={n}><G w={12} h={11}><path {...f} d={d} /></G></IconButton>))}
        </Transport>
      </Panel>
      <Panel $h={223}>
        <Tabs $pad={1}>
          <PresetTab>&amp; Presets</PresetTab><Tab $active $line>Character <MenuIcon /></Tab><Push /><More /><CharEnd />
        </Tabs>
        <FontBlock>
          <Pick label="Font" value="Gotham" $h={19} $split />
          <G w={18} h={18}><path d="M2 16q-1-1 0-2.500L9.500 6l2.500 2.500L5 16q-1.500 1-3 0z" /><path {...f} d="M9 4l2-1q3-4 5-2t-1.500 5L14 8l1 1-1.500 1.500L8 5z" /></G>
          <SwatchArt aria-label="Fill and stroke">
            <G w={43} h={43}>
              <path fill="#fff" stroke="#222" d="M14.500 14.500h27v27h-27z" /><path fill="#444" stroke="#222" d="M22.500 22.500h11v11h-11z" />
              <path stroke="#c22a36" strokeWidth="2" d="M14.500 41.500l27-27" />
              <path fill="#fff" stroke="#222" d="M0.500 .500h28v29H.500zM.500 30.500h11v11H.500z" /><path stroke="#c22a36" d="M2 40l8-8" />
              <path d="M32 5q6-1 6 6" strokeWidth="2" /><path {...f} d="M30 5l4-4v8zM38 14l-4-4h8z" />
            </G>
          </SwatchArt>
          <Pick label="Style" value="Medium" $h={19} $split />
          <G w={20} h={16}><path fill="#fff" stroke="#222" d="M.500.500h19v15H.500z" /><path fill="#2a2a2a" stroke="#fff" d="M1.500 1.500h17v6h-17z" /></G>
        </FontBlock>
        <HRule $m="4px 6px 3px" />
        <MetricGrid>
          <G w={19} h={16}><TT h="translate(7 1)" /><path {...f} d="M0 6h8v2.500H5V14H3V8.500H0z" /></G>
          <Value><Blue>165</Blue> px</Value><Arrow><Down /></Arrow>
          <G w={17} h={20}><Letter x="6" y="9" $s={10}>A</Letter><Letter x="6" y="18" $s={10}>A</Letter><path d="M5 10h10M3 9v8M1 11l2-2 2 2M1 16l2 2 2-2" /></G>
          <Value><Blue>Auto</Blue></Value><Down />
          <G w={20} h={18}><Letter x="0" y="10" $s={11}>V/A</Letter><path d="M9 15h7M12 12.500L9 15l3 2.500" /></G>
          <Value $off>Metrics</Value><Arrow><Down /></Arrow>
          <G w={20} h={18}><path {...f} d="M1 0h18v11H1z" /><Letter x="3" y="10" $s={11} $c="#333">VA</Letter><path d="M1 15h18M4 12.500L1 15l3 2.500M16 12.500l3 2.500-3 2.500" /></G>
          <Value><Blue>0</Blue></Value><Down />
        </MetricGrid>
        <HRule />
        <MetricGrid $stroke>
          <G w={16} h={14}><path d="M1 2h14" /><path d="M1 6.500h14" strokeWidth="2" /><path d="M1 11.500h14" strokeWidth="3" /></G>
          <Value>- px</Value><Arrow><Down /></Arrow>
          <Pick label="Stroke order" value="" $h={19} />
        </MetricGrid>
        <HRule />
        <MetricGrid>
          <G w={19} h={15}><TT h="translate(8 1)" /><path d="M3 1v13M1 3.500L3 1l2 2.500M1 11.500L3 14l2-2.500" /></G>
          <Value><Blue>100</Blue> %</Value><Arrow><Down /></Arrow>
          <G w={18} h={18}><TT h="translate(4 0)" /><path d="M1 15.500h16M4 13l-3 2.500L4 18M14 13l3 2.500-3 2.500" /></G>
          <Value><Blue>100</Blue> %</Value><Down />
          <G w={19} h={16}><Letter x="0" y="12" $s={13}>A</Letter><Letter x="9" y="8" $s={9}>a</Letter><path d="M0 14h9M13 15V9.500M11 12l2-2.500 2 2.500" /></G>
          <Value><Blue>0</Blue> px</Value><Arrow><Down /></Arrow>
          <G w={17} h={16}><path strokeDasharray="1 1" d="M2 1v10M15 1v10" /><circle cx="8.500" cy="7" r="2.500" /><path d="M4.500 3h8M8 1v9M1 14h5M16 14h-5M4 12l2 2-2 2M13 12l-2 2 2 2" /></G>
          <Value><Blue>0</Blue> %</Value><Down />
        </MetricGrid>
        <HRule />
      </Panel>
      <Panel $grow>
        <Tabs><Tab $active>Paragraph <MenuIcon /></Tab></Tabs>
        <AlignRow>
          {aligns.map(([n, rows, mr], i) => <AlignButton key={n} aria-label={n} $active={i === 0} $mr={mr}><AlignIcon rows={rows} /></AlignButton>)}
        </AlignRow>
        <HRule $m="5px 16px 2px 7px" />
        <IndentGrid>
          <G w={16} h={15}><path d="M0 7.500h5M3 5l3 2.500L3 10M8 0v15M10 2h4M10 5h6M10 8h4M10 11h6M10 14h4" /></G><Value><Blue>0</Blue> px</Value>
          <G w={16} h={15}><path d="M0 3.500h5M3 1l3 2.500L3 6M7.500 1h8v5h-8zM8 9h7M8 12h5M8 14.500h7" /></G><Value><Blue>0</Blue> px</Value>
          <G w={16} h={15}><path d="M0 2h4M3 0l2 2-2 2.500M7 2h7M6 6h9M6 9h9M6 12h9M6 14.500h9" /></G><Value><Blue>0</Blue> px</Value>
          <G w={16} h={15}><path d="M0 1h6M0 4h4M0 7h6M0 10h4M0 13h6M8.500 0v15M16 7.500h-5M13 5l-3 2.500 3 2.500" /></G><Value><Blue>0</Blue> px</Value>
          <G w={16} h={15}><path d="M8 1h7M8 3.500h5M8 6h7M7.500 9h8v5h-8zM0 11.500h5M3 9l3 2.500L3 14" /></G><Value><Blue>0</Blue> px</Value>
        </IndentGrid>
      </Panel>
    </SideColumn>
  );
}

/* ---------- watermark layer ---------- */
const Marks = styled.div`position: absolute; inset: 0; pointer-events: none; overflow: hidden; z-index: 5;`;
const Stamp = styled.div`
  position: absolute; left: ${p => p.$x}%; top: ${p => p.$y}%; display: flex; align-items: center; gap: 18px;
  transform-origin: 15px 15px; transform: rotate(39deg); opacity: .06; color: #fff; white-space: nowrap;
  font: 700 24px/30px "Noto Sans CJK SC", sans-serif; margin: -15px 0 0 -15px;
`;
const Brand = styled.div`
  position: absolute; left: 43%; bottom: 12px; display: flex; align-items: center; gap: 14px; color: #aaa; opacity: .65;
  font: 700 32px/44px "Noto Sans CJK SC", sans-serif; white-space: nowrap;
`;
const TopMark = styled.div`
  position: absolute; left: 20px; top: 4px; color: #555; opacity: .05; font: 700 32px/36px "Noto Sans CJK SC", sans-serif; white-space: nowrap;
`;
const PlayMark = styled.div`position: absolute; right: 27px; bottom: 24px;`;
const Emblem = ({ s, c = '#3a8ee0' }) => (
  <Glyph width={s} height={s} viewBox="0 0 40 40" fill="none" stroke="currentColor" aria-hidden="true">
    <path d="M33 31A17 17 0 1137 20" strokeWidth="4.500" />
    <path d="M12 27l5-13 4 10 6-10 3 11 5 3" stroke={c} strokeWidth="4" />
  </Glyph>
);
const spots = [[300, 87], [515, 80], [788, 88], [1017, 78], [143, 221], [380, 262], [815, 262], [1030, 320], [120, 438], [367, 438], [618, 468], [880, 458], [1085, 615], [615, 293], [500, 603], [850, 607], [232, 606]];

function Watermarks() {
  return (
    <Marks aria-hidden="true">
      {spots.map(([x, y]) => <Stamp key={x + '-' + y} $x={x / 12.8} $y={y / 7.2}><Emblem s={30} />人人素材</Stamp>)}
      <TopMark>人人素材社区</TopMark>
      <Brand><Emblem s={42} />人人素材</Brand>
      <PlayMark><G w={46} h={46}><circle cx="23" cy="23" r="23" fill="#707070" stroke="none" /><path stroke="#4a4a4a" strokeWidth="2" d="M17.500 13v20l18-10zM17.500 15.500H13v15h4.500M20 17v12l9-6z" /></G></PlayMark>
    </Marks>
  );
}

const ShapeGap = styled.span`width: 12px;`;

export default function App() {
  return (
    <Page>
      <Global />
      <TitleBar>
        <AppBadge>Ae</AppBadge>
        <Title>Adobe After Effects CC 2017 - Untitled Project.aep *</Title>
        <WinButtons>
          <WinButton aria-label="Minimize"><G w={11} h={5}><path fill="#fff" stroke="#445" d="M.500.500h10v3.500H.500z" /></G></WinButton>
          <WinButton aria-label="Restore"><G w={12} h={11}><path fill="#fff" stroke="#445" d="M4.500.500h7v6h-7zM.500 3.500h7v6.500h-7zM3 6h2v2H3z" /></G></WinButton>
          <WinButton $close aria-label="Close"><G w={11} h={9}><path stroke="#543" strokeWidth="4" d="M1.500 1l8 7M9.500 1l-8 7" /><path stroke="#fff" strokeWidth="2.400" d="M1.500 1l8 7M9.500 1l-8 7" /></G></WinButton>
        </WinButtons>
      </TitleBar>
      <MenuBar>
        {['File', 'Edit', 'Composition', 'Layer', 'Effect', 'Animation', 'View', 'Window', 'Help'].map(m => <a key={m} href="#menu">{m}</a>)}
      </MenuBar>
      <Toolbar>
        <Grip />
        {tools.map((t, i) => (t ? <Tool key={t[0]} aria-label={t[0]} $active={t[2]}>{t[1]}</Tool> : <Rule key={i} />))}
        <ShapeOptions>
          <Rule /><ShapeGap /><Star c="#6c6c6c" />
          <G w={18} h={18}><path fill="#3a5068" stroke="#667" d="M.500.500h17v17H.500z" /><path stroke="#526a84" strokeDasharray="2 2" strokeWidth="2" d="M2 4h14M4 6.500h12M2 9h14M4 11.500h12M2 14h14" /></G>
        </ShapeOptions>
        <Rule />
        <Workspaces>
          <Workspace href="#essentials" $wide>Essentials</Workspace>
          <Workspace href="#standard" $active>Standard</Workspace>
          <Blue><MenuIcon /></Blue>
          <Workspace href="#effects" $ml={8}>Effects</Workspace>
          <Push /><More />
        </Workspaces>
        <Rule />
        <Tool aria-label="Workspace settings"><G w={20} h={12}><path {...f} d="M0 0h20v12H0z" /><circle cx="6" cy="6" r="2.500" stroke="#333" strokeWidth="1.500" /><path stroke="#333" strokeDasharray="1 2" d="M6 1.500a4.500 4.500 0 100 9 4.500 4.500 0 000-9M12 4h6M12 8h6" /><path fill="#333" stroke="none" d="M12 4l2.500-2v4zM18 8l-2.500-2v4z" /></G></Tool>
        <SearchHelp><Search /><input aria-label="Search Help" placeholder="Search Help" /></SearchHelp>
      </Toolbar>
      <Workbench>
        <MainColumn>
          <UpperRow><ProjectPanel /><CompPanel /></UpperRow>
          <Timeline />
        </MainColumn>
        <SidePanels />
      </Workbench>
      <Watermarks />
    </Page>
  );
}
